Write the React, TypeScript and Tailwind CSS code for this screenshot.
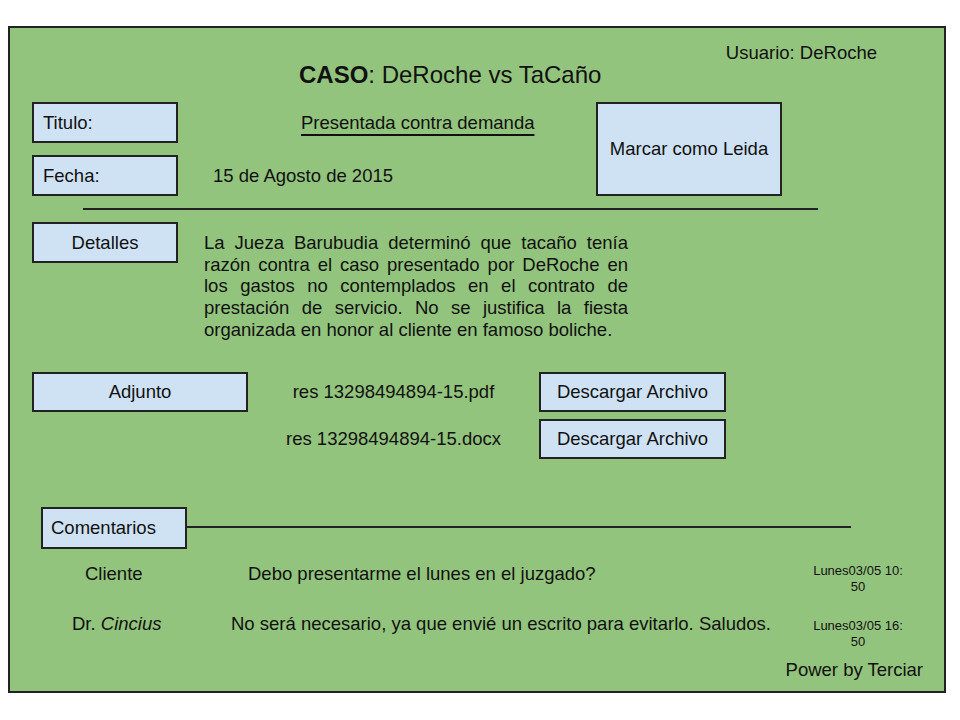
import { ReactNode } from 'react';

// wireframe colours: Google Drawings light green + light blue
const box = 'border-2 border-[#222] bg-[#cfe2f3]';

function Label({ children, className = '' }: { children: ReactNode; className?: string }) {
  return <div className={`${box} flex items-center shrink-0 ${className}`}>{children}</div>;
}

function Stamp({ day, time, className = '' }: { day: string; time: string; className?: string }) {
  const [h, m] = time.split(':');
  return (
    <div className={`w-[96px] mr-[38px] shrink-0 text-center text-[13px] leading-[16px] ${className}`}>
      {day} {h}:
      <br />
      {m}
    </div>
  );
}

export default function App() {
  return (
    <div className="w-[960px] h-[720px] bg-white pt-[26px] pl-[8px] text-[#111] font-['Liberation_Sans',Arial,sans-serif]">
      <div className="w-[938px] h-[667px] border-2 border-[#222] bg-[#93c47d] flex flex-col">
        {/* header */}
        <div className="flex items-start h-[74px] shrink-0">
          <h1 className="ml-[289px] mt-[33px] text-[24px] leading-[28px] whitespace-nowrap">
            <span className="font-bold">CASO</span>: DeRoche vs TaCaño
          </h1>
          <div className="ml-auto mr-[67px] mt-[14px] text-[18.5px] leading-[22px] whitespace-nowrap">
            Usuario: DeRoche
          </div>
        </div>

        {/* titulo / fecha / marcar */}
        <div className="flex h-[94px] shrink-0 text-[18.5px] leading-[22px]">
          <div className="w-[586px] flex flex-col gap-[12px]">
            <div className="flex items-center">
              <Label className="ml-[22px] w-[146px] h-[41px] pl-[9px]">Titulo:</Label>
              <span className="ml-[123px] underline underline-offset-[5px] decoration-[1.5px] whitespace-nowrap">
                Presentada contra demanda
              </span>
            </div>
            <div className="flex items-center">
              <Label className="ml-[22px] w-[146px] h-[41px] pl-[9px]">Fecha:</Label>
              <span className="ml-[35px] whitespace-nowrap">15 de Agosto de 2015</span>
            </div>
          </div>
          <Label className="w-[186px] h-[94px] justify-center">Marcar como Leida</Label>
        </div>

        <div className="mt-[12px] ml-[73px] w-[735px] h-[2px] bg-[#222] shrink-0" />

        {/* detalles */}
        <div className="flex items-start mt-[12px] text-[18.5px] leading-[22px] shrink-0">
          <Label className="ml-[22px] w-[146px] h-[41px] justify-center">Detalles</Label>
          <p className="ml-[26px] mt-[10px] w-[424px] text-justify leading-[21.7px]">
            La Jueza Barubudia determinó que tacaño tenía razón contra el caso presentado por DeRoche en los
            gastos no contemplados en el contrato de prestación de servicio. No se justifica la fiesta
            organizada en honor al cliente en famoso boliche.
          </p>
        </div>

        {/* adjuntos */}
        <div className="flex items-start mt-[31px] text-[18.5px] leading-[22px] shrink-0">
          <Label className="ml-[22px] w-[216px] h-[40px] justify-center">Adjunto</Label>
          <div className="flex flex-col gap-[7px]">
            {['res 13298494894-15.pdf', 'res 13298494894-15.docx'].map((f) => (
              <div key={f} className="flex items-center">
                <span className="w-[291px] text-center whitespace-nowrap">{f}</span>
                <Label className="w-[187px] h-[40px] justify-center">Descargar Archivo</Label>
              </div>
            ))}
          </div>
        </div>

        {/* comentarios */}
        <div className="flex items-start mt-[48px] text-[18.5px] leading-[22px] shrink-0">
          <Label className="ml-[31px] w-[146px] h-[42px] pl-[8px]">Comentarios</Label>
          <div className="mt-[19px] w-[664px] h-[2px] bg-[#222]" />
        </div>

        <div className="flex items-start mt-[14px] text-[18.5px] leading-[22px] shrink-0">
          <div className="w-[221px] pl-[75px] shrink-0">Cliente</div>
          <div className="flex-1 pl-[17px] whitespace-nowrap">Debo presentarme el lunes en el juzgado?</div>
          <Stamp day="Lunes03/05" time="10:50" />
        </div>

        <div className="flex items-start mt-[18px] text-[18.5px] leading-[22px] shrink-0">
          <div className="w-[221px] pl-[62px] shrink-0">
            Dr. <i>Cincius</i>
          </div>
          <div className="flex-1 whitespace-nowrap">No será necesario, ya que envié un escrito para evitarlo. Saludos.</div>
          <Stamp day="Lunes03/05" time="16:50" className="mt-[5px]" />
        </div>

        <div className="mt-auto mb-[10px] mr-[21px] self-end text-[18.5px] leading-[22px]">Power by Terciar</div>
      </div>
    </div>
  );
}
